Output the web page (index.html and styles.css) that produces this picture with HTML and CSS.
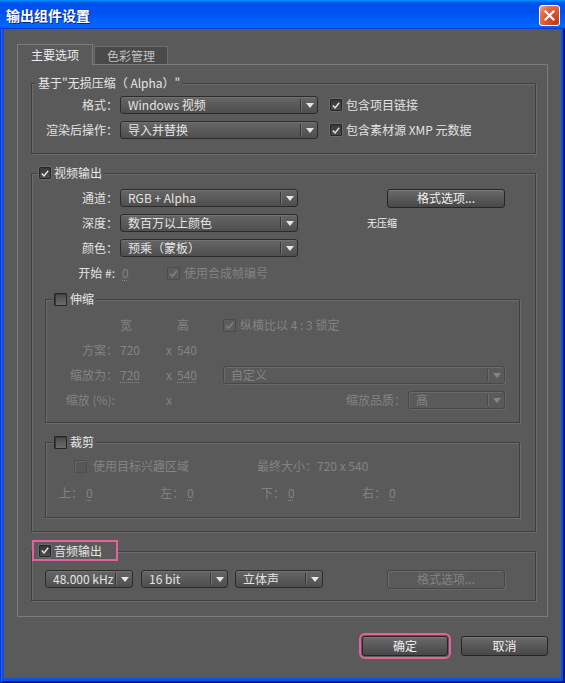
FILE: index.html
```html
<!DOCTYPE html>
<html lang="zh-CN">
<head>
<meta charset="utf-8">
<title>输出组件设置</title>
<link rel="stylesheet" href="styles.css">
</head>
<body>
<div class="window">
  <div class="titlebar">
    <span class="title">输出组件设置</span>
    <span class="close"><svg width="11" height="11" viewBox="0 0 11 11"><path d="M1.5 1.5 L9.5 9.5 M9.5 1.5 L1.5 9.5" stroke="#fff" stroke-width="2.2" stroke-linecap="square"/></svg></span>
  </div>
  <div class="client">
    <div class="tabs">
      <div class="tab active">主要选项</div>
      <div class="tab">色彩管理</div>
    </div>
    <div class="panel">

      <div class="group g1">
        <div class="legend">基于"无损压缩（ Alpha）"</div>
        <div class="row r-first5">
          <span class="lbl">格式：</span>
          <span class="sel w198"><span class="val">Windows 视频</span><span class="arr"><i></i></span></span>
          <span class="cb on ml12"><svg width="11" height="11" viewBox="0 0 11 11"><path d="M2 5.5 L4.5 8.2 L9 2.5" fill="none" stroke="#e4e4e4" stroke-width="1.6"/></svg></span>
          <span class="txt">包含项目链接</span>
        </div>
        <div class="row r-gap7">
          <span class="lbl">渲染后操作：</span>
          <span class="sel w198"><span class="val">导入并替换</span><span class="arr"><i></i></span></span>
          <span class="cb on ml12"><svg width="11" height="11" viewBox="0 0 11 11"><path d="M2 5.5 L4.5 8.2 L9 2.5" fill="none" stroke="#e4e4e4" stroke-width="1.6"/></svg></span>
          <span class="txt">包含素材源 XMP 元数据</span>
        </div>
      </div>

      <div class="group g2">
        <div class="legend">
          <span class="cb on"><svg width="11" height="11" viewBox="0 0 11 11"><path d="M2 5.5 L4.5 8.2 L9 2.5" fill="none" stroke="#e4e4e4" stroke-width="1.6"/></svg></span>
          <span class="ltxt">视频输出</span>
        </div>
        <div class="row r-first8">
          <span class="lbl">通道：</span>
          <span class="sel w178"><span class="val">RGB + Alpha</span><span class="arr"><i></i></span></span>
          <span class="btn fmt">格式选项...</span>
        </div>
        <div class="row r-gap7">
          <span class="lbl">深度：</span>
          <span class="sel w178"><span class="val">数百万以上颜色</span><span class="arr"><i></i></span></span>
          <span class="note">无压缩</span>
        </div>
        <div class="row r-gap7">
          <span class="lbl">颜色：</span>
          <span class="sel w178"><span class="val">预乘（蒙板）</span><span class="arr"><i></i></span></span>
        </div>
        <div class="row r-gap7">
          <span class="lbl pr3">开始 #:</span>
          <span class="num0 dis"><span class="dot">0</span></span>
          <span class="cb dis-on"><svg width="11" height="11" viewBox="0 0 11 11"><path d="M2 5.5 L4.5 8.2 L9 2.5" fill="none" stroke="#808080" stroke-width="1.6"/></svg></span>
          <span class="txt dis">使用合成帧编号</span>
        </div>

        <div class="group inner stretch">
          <div class="legend in">
            <span class="cb off"></span>
            <span class="ltxt">伸缩</span>
          </div>
          <div class="row r-first9 dis">
            <span class="lbl2"></span>
            <span class="c1">宽</span>
            <span class="cx"></span>
            <span class="c2">高</span>
            <span class="cb dis-on"><svg width="11" height="11" viewBox="0 0 11 11"><path d="M2 5.5 L4.5 8.2 L9 2.5" fill="none" stroke="#808080" stroke-width="1.6"/></svg></span>
            <span class="txt">纵横比以 4 : 3 锁定</span>
          </div>
          <div class="row r-gap7 dis">
            <span class="lbl2">方案：</span>
            <span class="c1">720</span>
            <span class="cx">x</span>
            <span class="c2">540</span>
          </div>
          <div class="row r-gap7 dis">
            <span class="lbl2">缩放为：</span>
            <span class="c1"><span class="dot">720</span></span>
            <span class="cx">x</span>
            <span class="c2"><span class="dot">540</span></span>
            <span class="sel dsel w282"><span class="val">自定义</span><span class="arr"><i></i></span></span>
          </div>
          <div class="row r-gap7 dis">
            <span class="lbl2 pr3">缩放 (%):</span>
            <span class="c1"></span>
            <span class="cx">x</span>
            <span class="c2"></span>
            <span class="lblq">缩放品质：</span>
            <span class="sel dsel w97"><span class="val">高</span><span class="arr"><i></i></span></span>
          </div>
        </div>

        <div class="group inner crop">
          <div class="legend in">
            <span class="cb off"></span>
            <span class="ltxt">裁剪</span>
          </div>
          <div class="row r-first7 dis crow1">
            <span class="roi"><span class="cb dis-off"></span><span class="txt ml6">使用目标兴趣区域</span></span>
            <span class="final">最终大小：720 x 540</span>
          </div>
          <div class="row r-gap9 dis crow2">
            <span class="edge">上：<span class="dot">0</span></span>
            <span class="edge">左：<span class="dot">0</span></span>
            <span class="edge">下：<span class="dot">0</span></span>
            <span class="edge">右：<span class="dot">0</span></span>
          </div>
        </div>
      </div>

      <div class="group g3">
        <div class="legend pink">
          <span class="cb on"><svg width="11" height="11" viewBox="0 0 11 11"><path d="M2 5.5 L4.5 8.2 L9 2.5" fill="none" stroke="#e4e4e4" stroke-width="1.6"/></svg></span>
          <span class="ltxt">音频输出</span>
        </div>
        <div class="row r-first9">
          <span class="sel w88"><span class="val">48.000 kHz</span><span class="arr"><i></i></span></span>
          <span class="sel w87 ml8"><span class="val">16 bit</span><span class="arr"><i></i></span></span>
          <span class="sel w88 ml7"><span class="val">立体声</span><span class="arr"><i></i></span></span>
          <span class="btn dbtn fmt2">格式选项...</span>
        </div>
      </div>

    </div>
    <div class="actions">
      <span class="btn ok">确定</span>
      <span class="btn cancel">取消</span>
    </div>
  </div>
</div>
</body>
</html>
```

FILE: styles.css
```css
* { box-sizing: border-box; }
html, body { margin: 0; padding: 0; }
body {
  width: 565px;
  height: 683px;
  overflow: hidden;
  font-family: "Noto Sans CJK SC", "Noto Sans", sans-serif;
  font-size: 12px;
  line-height: 16px;
  color: #e2e2e2;
}

.window {
  width: 565px;
  height: 683px;
  display: flex;
  flex-direction: column;
  background: #0b50e2;
  box-shadow: inset 1px 0 0 #0831d9, inset -1px 0 0 #00138c, inset 0 -1px 0 #00138c, inset 2px 0 0 #166aee, inset -2px -2px 0 #001ea0;
}

.titlebar {
  flex: 0 0 29px;
  display: flex;
  align-items: flex-start;
  justify-content: space-between;
  padding: 0 5px 0 6px;
  background: linear-gradient(180deg, #0997ff 0%, #0053ee 10%, #0050ee 40%, #0066ff 86%, #0066ff 92%, #005bff 95%, #003dd7 97%, #003dd7 100%);
}
.title {
  margin-top: 6px;
  font-size: 14px;
  font-weight: bold;
  line-height: 18px;
  color: #fff;
  text-shadow: 1px 1px 0 #0a1e80;
}
.close {
  margin-top: 5px;
  width: 21px;
  height: 21px;
  border: 1px solid #fff;
  border-radius: 3px;
  background: radial-gradient(circle at 85% 85%, #c23a12 0%, #d9542c 45%, #e4744e 75%, #f3b59c 100%);
  display: flex;
  align-items: center;
  justify-content: center;
}

.client {
  flex: 1;
  margin: 0 4px 5px 4px;
  background: #5a5a5a;
  padding: 15px 13px 0 13px;
  display: flex;
  flex-direction: column;
}

.tabs {
  display: flex;
  align-items: flex-end;
  height: 20px;
}
.tab {
  height: 18px;
  margin-left: 1px;
  padding: 0 12px;
  border: 1px solid #6e6e6e;
  border-bottom: none;
  background: #4a4a4a;
  color: #c2c2c2;
  line-height: 17px;
}
.tab.active {
  height: 21px;
  margin-left: 0;
  margin-bottom: -1px;
  padding: 0 13px;
  border-color: #7c7c7c;
  background: #5a5a5a;
  color: #ececec;
  line-height: 19px;
  position: relative;
  z-index: 1;
}

.panel {
  border: 1px solid #7c7c7c;
  padding: 18px 11px 15px 13px;
}

.group {
  border: 1px solid #404040;
  box-shadow: inset 1px 1px 0 #6c6c6c, 1px 1px 0 #6c6c6c;
}
.g1 { padding-bottom: 14px; }
.g2 { margin-top: 19px; padding-bottom: 13px; }
.g3 { margin-top: 19px; padding: 0 0 12px 13px; }
.inner { margin: 17px 15px 0 13px; }
.stretch { padding-bottom: 13px; }
.crop { margin-top: 19px; padding-bottom: 15px; }

.legend {
  width: max-content;
  height: 16px;
  margin-top: -9px;
  margin-left: 4px;
  padding: 0 2px;
  background: #5a5a5a;
  display: flex;
  align-items: center;
  color: #e6e6e6;
}
.g2 > .legend { margin-left: 5px; }
.legend.in { margin-left: 6px; }
.legend.pink {
  height: 21px;
  margin-top: -12px;
  margin-left: -13px;
  padding: 0 14px 0 5px;
  border: 2px solid #e4619d;
}
.ltxt { margin-left: 3px; }

.row {
  display: flex;
  align-items: center;
  height: 18px;
}
.r-first5 { margin-top: 5px; }
.r-first7 { margin-top: 7px; }
.r-first8 { margin-top: 8px; }
.r-first9 { margin-top: 9px; }
.r-gap7 { margin-top: 7px; }
.r-gap9 { margin-top: 9px; }

/* labels use the TC face so the full-width colon sits centred, as in the original */
.lbl, .lbl2, .lblq, .edge, .final {
  font-family: "Noto Sans CJK TC", "Noto Sans CJK SC", sans-serif;
}
.lbl {
  width: 86px;
  margin-right: 2px;
  text-align: right;
  white-space: nowrap;
  flex: none;
}
.pr3 { padding-right: 3px; }
.lbl2 {
  width: 72px;
  margin-right: 2px;
  text-align: right;
  white-space: nowrap;
  flex: none;
}
.c1, .c2 { width: 46px; flex: none; }
.cx { width: 11px; flex: none; }
.lblq { width: 183px; text-align: right; flex: none; }

.dis { color: #838383; }
.dot {
  text-decoration: underline dotted #8a8a8a;
  text-underline-offset: 2px;
}
.num0 { width: 47px; padding-left: 2px; flex: none; }

.txt { margin-left: 4px; white-space: nowrap; }
.ml6 { margin-left: 6px; }
.ml7 { margin-left: 7px; }
.ml8 { margin-left: 8px; }
.ml12 { margin-left: 12px; }

.cb {
  width: 13px;
  height: 13px;
  flex: none;
  display: inline-flex;
  align-items: center;
  justify-content: center;
  border: 1px solid #262626;
  border-radius: 1px;
}
.cb.on { background: linear-gradient(#383838, #4c4c4c); box-shadow: 0 0 0 1px #6a6a6a; width: 12px; height: 12px; }
.cb.off { background: linear-gradient(#4c4c4c, #6a6a6a); box-shadow: inset 1px 1px 0 #3a3a3a; }
.cb.dis-on { border-color: #4b4b4b; background: #5c5c5c; }
.cb.dis-off { border-color: #4d4d4d; background: #575757; box-shadow: inset 1px 1px 0 #666; }

.sel {
  height: 18px;
  flex: none;
  display: flex;
  align-items: center;
  border: 1px solid #2b2b2b;
  border-radius: 3px;
  background: linear-gradient(#666666, #4e4e4e);
  box-shadow: inset 0 1px 0 #727272;
  color: #e4e4e4;
}
.sel .val { flex: 1; padding-left: 7px; white-space: nowrap; overflow: hidden; }
.sel .arr {
  width: 17px;
  height: 12px;
  flex: none;
  display: flex;
  align-items: center;
  justify-content: center;
  border-left: 1px solid #363636;
  box-shadow: inset 1px 0 0 #727272;
}
.sel .arr i {
  width: 0;
  height: 0;
  border-left: 4px solid transparent;
  border-right: 4px solid transparent;
  border-top: 5px solid #e6e6e6;
  margin-left: 1px;
}
.dsel {
  background: #5a5a5a;
  border-color: #484848;
  box-shadow: inset 1px 1px 0 #6a6a6a, 1px 1px 0 #666;
  color: #848484;
}
.dsel .arr { border-left-color: #4a4a4a; box-shadow: inset 1px 0 0 #6a6a6a; }
.dsel .arr i { border-top-color: #858585; }

.w198 { width: 198px; }
.w178 { width: 178px; }
.w282 { width: 282px; }
.w97 { width: 97px; margin-left: 2px; }
.w88 { width: 88px; }
.w87 { width: 87px; }

.btn {
  height: 19px;
  flex: none;
  display: flex;
  align-items: center;
  justify-content: center;
  border: 1px solid #262626;
  border-radius: 3px;
  background: linear-gradient(#6a6a6a, #474747);
  box-shadow: inset 0 1px 0 #7a7a7a;
  color: #f0f0f0;
  font-size: 12px;
}
.fmt { width: 118px; margin-left: 89px; }
.dbtn {
  background: #5a5a5a;
  border-color: #464646;
  box-shadow: inset 1px 1px 0 #6c6c6c, 1px 1px 0 #686868;
  color: #838383;
}
.fmt2 { width: 118px; margin-left: 64px; }

.note {
  margin-left: 69px;
  font-size: 10px;
  color: #eeeeee;
}

.crow1 { padding-left: 28px; }
.roi { width: 183px; display: flex; align-items: center; flex: none; }
.crow2 { padding-left: 13px; }
.edge { width: 101px; flex: none; }
.edge .dot { margin-left: 3px; }

.actions {
  margin-top: 19px;
  display: flex;
  justify-content: flex-end;
  gap: 13px;
}
.ok { width: 86px; height: 20px; outline: 2px solid #e4619d; outline-offset: 1px; }
.cancel { width: 87px; height: 20px; }
```
